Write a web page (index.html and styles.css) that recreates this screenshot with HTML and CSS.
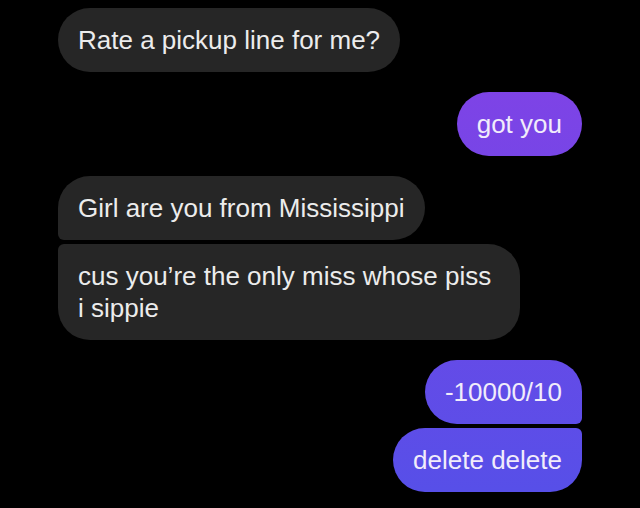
FILE: index.html
```html
<!DOCTYPE html>
<html lang="en">
<head>
  <meta charset="UTF-8" />
  <meta name="viewport" content="width=device-width, initial-scale=1" />
  <title>Chat</title>
  <link rel="stylesheet" href="styles.css">
</head>
<body>
  <div class="thread">
    <div class="group left">
      <div class="bubble">Rate a pickup line for me?</div>
    </div>
    <div class="group right">
      <div class="bubble">got you</div>
    </div>
    <div class="group left">
      <div class="bubble first">Girl are you from Mississippi</div>
      <div class="bubble last long">cus you’re the only miss whose piss<br>i sippie</div>
    </div>
    <div class="group right">
      <div class="bubble first">-10000/10</div>
      <div class="bubble last">delete delete</div>
    </div>
  </div>
</body>
</html>
```

FILE: styles.css
```css
:root {
  --bg: #000;
  --theirs: #262626;
  --text: #ececec;
  --mine-top: #7e43e6;
  --mine-bottom: #574fe8;
}
body {
  margin: 0;
  background: var(--bg);
  font-family: 'Liberation Sans', Arial, sans-serif;
  color: var(--text);
}
.thread {
  display: flex;
  flex-direction: column;
  gap: 20px;
  padding: 8px 58px;
}
.group {
  display: flex;
  flex-direction: column;
  gap: 4px;
}
.group.left {
  align-items: flex-start;
}
.group.right {
  align-items: flex-end;
}
.bubble {
  font-size: 26px;
  line-height: 32px;
  padding: 16px 20px;
  border-radius: 32px;
  background: var(--theirs);
}
.right .bubble {
  background: linear-gradient(180deg, var(--mine-top) 90px, var(--mine-bottom) 490px);
  background-attachment: fixed;
  color: #f1ecfb;
}
.bubble.long {
  width: 462px;
  box-sizing: border-box;
}
.left .bubble.first {
  border-bottom-left-radius: 6px;
}
.left .bubble.last {
  border-top-left-radius: 6px;
}
.right .bubble.first {
  border-bottom-right-radius: 6px;
}
.right .bubble.last {
  border-top-right-radius: 6px;
}
```
